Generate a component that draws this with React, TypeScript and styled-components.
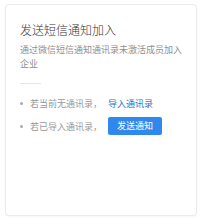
import styled, { createGlobalStyle } from 'styled-components';

const GlobalStyle = createGlobalStyle`
	html, body {
		margin: 0;
		padding: 0;
		background: #fff;
	}
	body {
		font-family: "Noto Sans CJK SC", "Noto Sans", sans-serif;
	}
`;

const Page = styled.div`
	padding: 4px 4px 3px 5px;
`;

const Card = styled.div`
	box-sizing: border-box;
	width: 192px;
	height: 212px;
	padding: 16px 14px;
	border: 1px solid #ebebeb;
	border-radius: 4px;
	box-shadow: 0 1px 2px rgba(0, 0, 0, 0.04);
	background: #fff;
`;

const Title = styled.h3`
	margin: 0;
	font-size: 12px;
	line-height: 17px;
	font-weight: 300;
	color: #333;
`;

const Desc = styled.p`
	margin: 5px 0 0;
	font-size: 9px;
	line-height: 13.5px;
	color: #8f8f8f;
`;

const Divider = styled.div`
	width: 21px;
	height: 1px;
	margin-top: 13px;
	background: #e6e6e6;
`;

const Steps = styled.ul`
	margin: 10px 0 0;
	padding: 0;
	list-style: none;
	display: flex;
	flex-direction: column;
	gap: 5px;
`;

const Step = styled.li`
	display: flex;
	align-items: center;
	height: 18px;
	font-size: 9px;
	color: #999;

	&::before {
		content: '';
		width: 3px;
		height: 3px;
		border-radius: 50%;
		background: #aaa;
		margin: 0 7px 0 0;
	}
`;

const Link = styled.a`
	margin-left: 6px;
	color: #2f72cc;
	text-decoration: none;
	cursor: pointer;
`;

const Button = styled.button`
	margin-left: 6px;
	height: 18px;
	padding: 0 9px;
	border: none;
	border-radius: 2px;
	background: #2f88ec;
	color: #fff;
	font-family: inherit;
	font-size: 9px;
	line-height: 18px;
	cursor: pointer;
`;

const App = () => {
	return (
		<>
			<GlobalStyle />
			<Page>
				<Card>
					<Title>发送短信通知加入</Title>
					<Desc>通过微信短信通知通讯录未激活成员加入企业</Desc>
					<Divider />
					<Steps>
						<Step>
							若当前无通讯录，<Link>导入通讯录</Link>
						</Step>
						<Step>
							若已导入通讯录，<Button>发送通知</Button>
						</Step>
					</Steps>
				</Card>
			</Page>
		</>
	);
};

export default App;
